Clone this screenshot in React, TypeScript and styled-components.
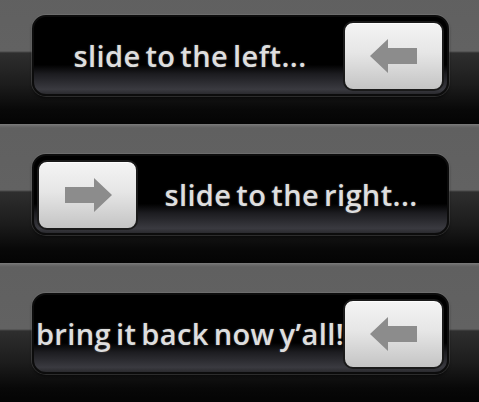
import React from "react";
import styled, { createGlobalStyle } from "styled-components";

const GlobalStyle = createGlobalStyle`
  html, body {
    margin: 0;
    padding: 0;
    background: #050505;
    overflow: hidden;
  }
  body {
    font-family: "Open Sans", "DejaVu Sans", sans-serif;
  }
`;

type Side = "left" | "right";

const sliders: { label: string; knob: Side }[] = [
  { label: "slide to the left...", knob: "right" },
  { label: "slide to the right...", knob: "left" },
  { label: "bring it back now y\u2019all!", knob: "right" },
];

function Arrow({ dir }: { dir: Side }) {
  return (
    <svg width="48" height="36" viewBox="0 0 48 36">
      <polygon
        points="0,18 18,1 18,10 47,10 47,26 18,26 18,35"
        fill="#8c8c8c"
        transform={dir === "right" ? "translate(48,0) scale(-1,1)" : undefined}
      />
    </svg>
  );
}

function App() {
  return (
    <Page>
      <GlobalStyle />
      {sliders.map((s, i) => (
        <Band key={i} $first={i === 0}>
          <Track $knob={s.knob}>
            <Knob>
              <Arrow dir={s.knob === "right" ? "left" : "right"} />
            </Knob>
            <Label>{s.label}</Label>
          </Track>
        </Band>
      ))}
    </Page>
  );
}

export default App;

const Page = styled.div`
  width: 479px;
  height: 402px;
  display: flex;
  flex-direction: column;
  overflow: hidden;
`;

const Band = styled.div<{ $first?: boolean }>`
  flex: none;
  height: ${(p) => (p.$first ? 124 : 139)}px;
  box-sizing: border-box;
  padding: ${(p) => (p.$first ? 15 : 30)}px 30px 0 32px;
  background-image: linear-gradient(
    to bottom,
    #7c7c7c 0px,
    #6a6a6a 2px,
    #606060 4px,
    #626262 66px,
    #2e2e2e 68px,
    #1c1c1c 100px,
    #080808 125px,
    #040404 139px
  );
  background-size: 100% 139px;
  background-repeat: no-repeat;
  background-position: 0 ${(p) => (p.$first ? -15 : 0)}px;
`;

const Track = styled.div<{ $knob: Side }>`
  width: 417px;
  height: 81px;
  box-sizing: border-box;
  display: flex;
  flex-direction: ${(p) => (p.$knob === "right" ? "row-reverse" : "row")};
  align-items: center;
  padding: 0 3px;
  border-radius: 14px;
  border: 2px solid #0c0c0c;
  background: linear-gradient(
    to bottom,
    #000 0%,
    #000 62%,
    #1c1c20 74%,
    #3a3a40 94%,
    #2a2a2e 100%
  );
  box-shadow: 0 0 0 1px rgba(150, 150, 150, 0.25), 0 2px 3px rgba(0, 0, 0, 0.6);
`;

const Knob = styled.div`
  flex: none;
  width: 101px;
  height: 70px;
  box-sizing: border-box;
  display: flex;
  align-items: center;
  justify-content: center;
  border-radius: 10px;
  border: 2px solid #1a1a1a;
  background: linear-gradient(to bottom, #f4f4f4 0%, #e6e6e6 45%, #c4c4c4 100%);
  box-shadow: inset 0 1px 0 rgba(255, 255, 255, 0.8);
`;

const Label = styled.div`
  flex: 1;
  min-width: 0;
  display: flex;
  justify-content: center;
  color: #dedede;
  font-size: 29px;
  font-weight: 600;
  letter-spacing: 0.4px;
  word-spacing: -3px;
  white-space: nowrap;
  text-shadow: 0 0 2px rgba(255, 255, 255, 0.3);
`;
